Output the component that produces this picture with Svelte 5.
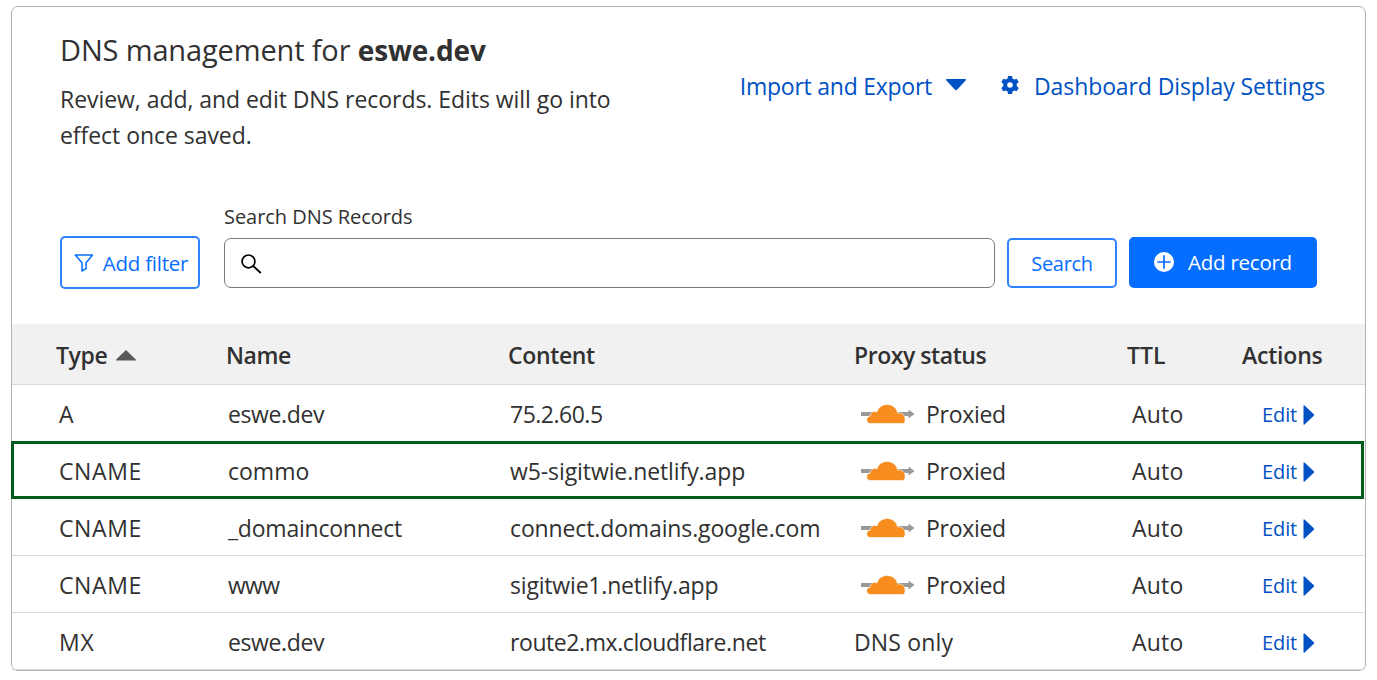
<script>
  const columns = [
    { key: 'type', label: 'Type', tracking: -0.4 },
    { key: 'name', label: 'Name', tracking: -0.4 },
    { key: 'content', label: 'Content', tracking: -0.36 },
    { key: 'proxy', label: 'Proxy status', tracking: -0.45 },
    { key: 'ttl', label: 'TTL', tracking: 0 },
    { key: 'actions', label: 'Actions', tracking: -0.2 },
  ];

  const cell = (text, tracking = 0) => ({ text, tracking });

  const records = [
    { type: cell('A'), name: cell('eswe.dev', -0.38), content: cell('75.2.60.5', -0.5), proxied: true },
    { type: cell('CNAME', 0.6), name: cell('commo', 0), content: cell('w5-sigitwie.netlify.app', -0.09), proxied: true, highlighted: true },
    { type: cell('CNAME', 0.6), name: cell('_domainconnect', -0.22), content: cell('connect.domains.google.com', -0.13), proxied: true },
    { type: cell('CNAME', 0.6), name: cell('www', -0.7), content: cell('sigitwie1.netlify.app', -0.18), proxied: true },
    { type: cell('MX', 0.9), name: cell('eswe.dev', -0.38), content: cell('route2.mx.cloudflare.net', -0.42), proxied: false },
  ];
</script>

<section class="card">
  <header class="top">
    <div class="intro">
      <h1>DNS management for <strong>eswe.dev</strong></h1>
      <p>Review, add, and edit DNS records. Edits will go into<br />effect once saved.</p>
    </div>
    <nav class="links">
      <a href="#import" class="import">
        <span>Import and Export</span>
        <svg width="20" height="12" viewBox="0 0 20 12"><path d="M1 0h18c1 0 1.300.8.6 1.500L11 10.700q-1 .9-2 0L.4 1.500C-.300.8 0 0 1 0z" /></svg>
      </a>
      <a href="#settings" class="settings">
        <svg width="18" height="20" viewBox="0 0 18 20">
          <path fill-rule="evenodd" d="M7 1h4l.5 2.600 1.700 1 2.500-.9 2 3.400-2 1.800v2.200l2 1.800-2 3.400-2.500-.9-1.700 1L11 19H7l-.5-2.600-1.700-1-2.500.9-2-3.400 2-1.800V8.900l-2-1.800 2-3.400 2.500.9 1.700-1zM9 7.200a2.800 2.800 0 1 0 0 5.600 2.800 2.800 0 0 0 0-5.600z" />
        </svg>
        <span>Dashboard Display Settings</span>
      </a>
    </nav>
  </header>

  <form class="toolbar" onsubmit={(e) => e.preventDefault()}>
    <button type="button" class="outline filter">
      <svg width="20" height="18" viewBox="0 0 20 18"><path d="M1.300 1h17.200l-6.400 7.700v6L8 17V8.700z" fill="none" stroke="currentColor" stroke-width="1.500" stroke-linejoin="round" /></svg>
      <span>Add filter</span>
    </button>
    <div class="field">
      <label for="search">Search DNS Records</label>
      <div class="box">
        <svg width="21" height="20" viewBox="0 0 21 20"><g fill="none" stroke="#000" stroke-width="1.700"><circle cx="7.500" cy="7.400" r="6.400" /><path d="M12 11.800l7.800 7.200" stroke-width="1.900" /></g></svg>
        <input id="search" type="text" />
      </div>
    </div>
    <button type="submit" class="outline search"><span>Search</span></button>
    <button type="button" class="add">
      <svg width="20" height="20" viewBox="0 0 20 20"><circle cx="10" cy="10" r="10" fill="#fff" /><path d="M10 3.300v13.400M3.300 10h13.400" stroke="#056dff" stroke-width="1.700" /></svg>
      <span>Add record</span>
    </button>
  </form>

  <div class="table" role="table">
    <div class="row head" role="row">
      {#each columns as column}
        <div class="cell {column.key}" role="columnheader">
          <span style:letter-spacing="{column.tracking}px">{column.label}</span>
          {#if column.key === 'type'}
            <svg class="sort" width="20" height="11" viewBox="0 0 20 11"><path d="M10 0l9.800 9.500q.3 1-.8 1H1q-1.100 0-.8-1z" fill="#595959" /></svg>
          {/if}
        </div>
      {/each}
    </div>

    {#each records as record}
      <div class="row" class:highlighted={record.highlighted} role="row">
        <div class="cell type" role="cell"><span style:letter-spacing="{record.type.tracking}px">{record.type.text}</span></div>
        <div class="cell name" role="cell"><span style:letter-spacing="{record.name.tracking}px">{record.name.text}</span></div>
        <div class="cell content" role="cell"><span style:letter-spacing="{record.content.tracking}px">{record.content.text}</span></div>
        <div class="cell proxy" role="cell">
          {#if record.proxied}
            <svg class="cloud" width="54" height="20" viewBox="0 0 54 20">
              <path d="M0 8h47.500V5.500l6 4.500-6 4.500V12H0z" fill="#999" />
              <path d="M9 19.500c-2 0-3.500-1.700-3.300-3.900.2-2 1.600-3.200 3.500-3.500-.2-3.300 3.600-5.700 6.800-4.200C17.200 3.500 21.300.5 26.300.5c5.300 0 9.500 3.600 10.200 8.500 4.300-.8 7.700 2.300 7.600 6.300 0 2.500-.8 4.200-1.900 4.200z" fill="#f78c1f" stroke="#fff" stroke-width=".6" />
            </svg>
            <span class="proxied">Proxied</span>
          {:else}
            <span class="dns-only">DNS only</span>
          {/if}
        </div>
        <div class="cell ttl" role="cell"><span>Auto</span></div>
        <div class="cell actions" role="cell">
          <a href="#edit">
            <span>Edit</span>
            <svg width="12" height="20" viewBox="0 0 12 20"><path d="M.5 1.200Q.5-.4 1.800.8l9 8.400q.8.8 0 1.600l-9 8.400Q.5 20.400.5 18.800z" /></svg>
          </a>
        </div>
      </div>
    {/each}
  </div>
</section>

<style>
  :global(body) {
    background: #fff;
  }

  .card {
    box-sizing: border-box;
    width: 1355px;
    height: 665px;
    margin: 6px 0 0 11px;
    border: 1px solid #b3b3b3;
    border-radius: 7px;
    font: 400 23px/36px 'Open Sans', sans-serif;
    color: #313131;
    display: flow-root;
    white-space: nowrap;
  }

  a {
    color: #0051c3;
    text-decoration: none;
    display: flex;
    align-items: center;
  }

  svg {
    fill: currentColor;
    flex: none;
    display: block;
  }

  .top {
    display: flex;
    justify-content: space-between;
    padding: 23px 40px 0 48px;
    height: 176px;
    box-sizing: border-box;
  }

  h1 {
    margin: 0 0 11px;
    font-size: 29px;
    line-height: 40px;
    font-weight: 400;
    letter-spacing: -0.15px;
  }

  h1 strong {
    font-size: 28px;
    letter-spacing: -0.15px;
  }

  p {
    margin: 0;
    letter-spacing: -0.05px;
  }

  .links {
    display: flex;
    height: 36px;
    margin-top: 38px;
  }

  .import {
    letter-spacing: -0.25px;
    gap: 14px;
    margin-right: 35px;
  }

  .import svg {
    margin-top: -2px;
  }

  .settings {
    letter-spacing: -0.1px;
    gap: 15px;
  }

  .settings svg {
    margin-top: -2px;
  }

  .toolbar {
    display: flex;
    align-items: flex-end;
    height: 106px;
    padding: 0 48px 0 48px;
  }

  button {
    box-sizing: border-box;
    display: flex;
    align-items: center;
    justify-content: center;
    margin: 0;
    padding: 0;
    font: 400 20.5px/30px 'Open Sans', sans-serif;
    letter-spacing: -0.3px;
    border-radius: 5px;
  }

  .outline {
    color: #056dff;
    border: 2px solid #2f83ff;
    background: #fff;
  }

  .filter {
    width: 140px;
    height: 53px;
    gap: 9px;
    padding-left: 2px;
    margin-right: 24px;
    letter-spacing: -0.25px;
  }

  .field {
    width: 771px;
    margin-bottom: 1px;
  }

  label {
    display: block;
    font-size: 20px;
    line-height: 28px;
    letter-spacing: -0.05px;
    margin-bottom: 7px;
  }

  .box {
    box-sizing: border-box;
    height: 50px;
    border: 1px solid #797979;
    border-radius: 7px;
    display: flex;
    align-items: center;
    padding: 1px 16px 0;
  }

  input {
    flex: 1;
    border: 0;
    outline: 0;
    background: none;
    font: inherit;
  }

  .search {
    width: 110px;
    height: 50px;
    margin: 0 12px 1px;
    padding-top: 2px;
    font-size: 20px;
  }

  .add {
    width: 188px;
    height: 51px;
    margin-bottom: 1px;
    background: #056dff;
    color: #fff;
    border: 0;
    gap: 14px;
    padding-bottom: 1px;
    letter-spacing: -0.25px;
  }

  .table {
    margin-top: 35px;
  }

  .row {
    box-sizing: border-box;
    position: relative;
    display: grid;
    grid-template-columns: 214px 282px 346px 273px 115px 123px;
    height: 57px;
    padding-top: 2px;
    border-bottom: 1px solid #d9d9d9;
  }

  .head {
    height: 61px;
    background: #f1f1f1;
    font-weight: 600;
  }

  .highlighted::after {
    content: '';
    position: absolute;
    inset: -1px 1px -1px -1px;
    border: 3px solid #035a1e;
  }

  .cell {
    display: flex;
    align-items: center;
  }

  .type {
    padding-left: 47px;
  }

  .head .type {
    padding-left: 44px;
    gap: 9px;
  }

  .sort {
    margin-top: 1px;
  }

  .name,
  .content {
    padding-left: 2px;
  }

  .head .name,
  .head .content {
    padding-left: 0;
  }

  .cloud {
    margin: 0 11px 0 7px;
  }

  .proxied {
    letter-spacing: -0.3px;
  }

  .dns-only {
    letter-spacing: 0.15px;
  }

  .ttl {
    padding-left: 5px;
    letter-spacing: 0.2px;
  }

  .head .ttl {
    padding-left: 0;
  }

  .actions {
    padding-left: 20px;
  }

  .head .actions {
    padding-left: 0;
  }

  .actions a {
    font-size: 20px;
    letter-spacing: -0.1px;
    gap: 6px;
  }

  .actions a span,
  .actions a svg {
    margin-top: 2px;
  }
</style>
